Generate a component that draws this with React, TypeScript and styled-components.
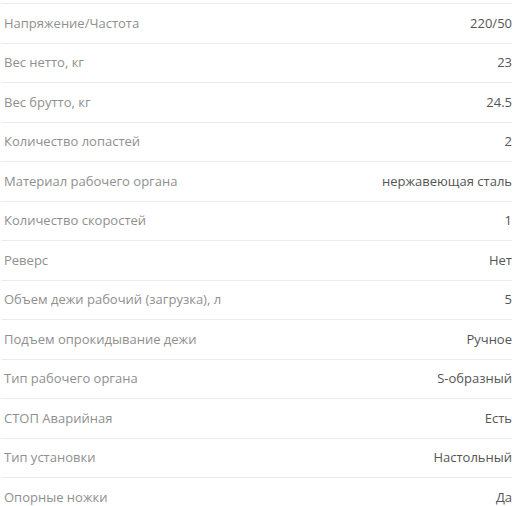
import React from "react";
import styled, { createGlobalStyle } from "styled-components";

const Global = createGlobalStyle`
  html, body { margin: 0; padding: 0; background: #fff; }
  body { font-family: "Open Sans", "Liberation Sans", sans-serif; }
`;

const Table = styled.div`
  display: flex;
  flex-direction: column;
  width: 511px;
  margin-left: 1px;
  padding-top: 3px;
`;

const Row = styled.div`
  display: flex;
  align-items: center;
  justify-content: space-between;
  box-sizing: border-box;
  height: 39.5px;
  border-top: 1px solid #ebebeb;
  padding: 0 0 1px 3px;
  font-size: 13px;
  line-height: 18px;
`;

const Label = styled.span`
  color: #8f8f8f;
`;

const Value = styled.span`
  color: #555;
  text-align: right;
`;

const data: [string, string][] = [
  ["Напряжение/Частота", "220/50"],
  ["Вес нетто, кг", "23"],
  ["Вес брутто, кг", "24.5"],
  ["Количество лопастей", "2"],
  ["Материал рабочего органа", "нержавеющая сталь"],
  ["Количество скоростей", "1"],
  ["Реверс", "Нет"],
  ["Объем дежи рабочий (загрузка), л", "5"],
  ["Подъем опрокидывание дежи", "Ручное"],
  ["Тип рабочего органа", "S-образный"],
  ["СТОП Аварийная", "Есть"],
  ["Тип установки", "Настольный"],
  ["Опорные ножки", "Да"],
];

export default function App() {
  return (
    <>
      <Global />
      <Table>
        {data.map(([k, v]) => (
          <Row key={k}>
            <Label>{k}</Label>
            <Value>{v}</Value>
          </Row>
        ))}
      </Table>
    </>
  );
}
